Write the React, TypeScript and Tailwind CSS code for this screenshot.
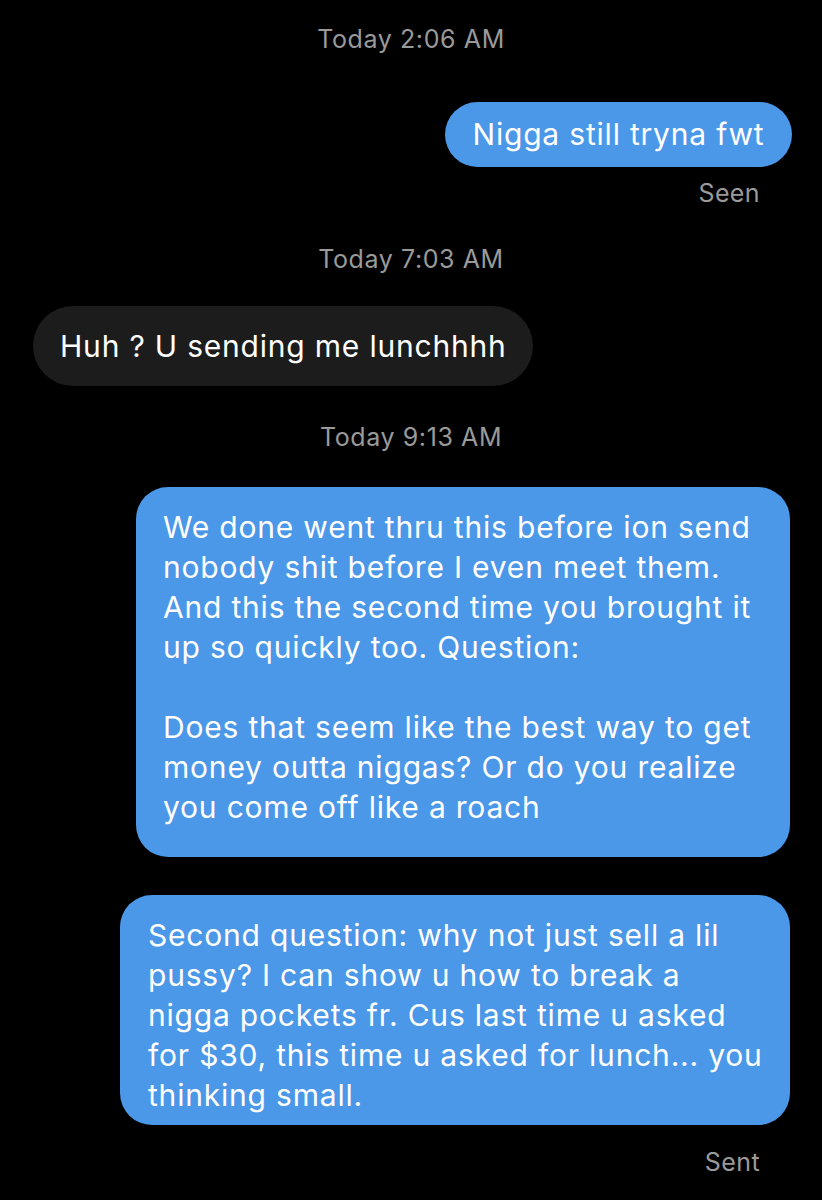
const font = { fontFamily: "Inter, 'Noto Sans', sans-serif" };

function Stamp({ children, className = "" }: { children: string; className?: string }) {
  return (
    <div className={`text-center text-[25px] leading-[30px] text-[#9a9a9a] tracking-[0.6px] ${className}`}>
      {children}
    </div>
  );
}

function Status({ children, className = "" }: { children: string; className?: string }) {
  return (
    <div className={`text-right pr-[62px] text-[25px] leading-[30px] text-[#9a9a9a] tracking-[0.4px] ${className}`}>
      {children}
    </div>
  );
}

const first = [
  "We done went thru this before ion send",
  "nobody shit before I even meet them.",
  "And this the second time you brought it",
  "up so quickly too. Question:",
  "\u00a0",
  "Does that seem like the best way to get",
  "money outta niggas? Or do you realize",
  "you come off like a roach",
];

const second = [
  "Second question: why not just sell a lil",
  "pussy? I can show u how to break a",
  "nigga pockets fr. Cus last time u asked",
  "for $30, this time u asked for lunch... you",
  "thinking small.",
];

export default function App() {
  return (
    <div className="w-[822px] h-[1200px] bg-black text-white overflow-hidden" style={font}>
      <Stamp className="pt-[24px]">Today 2:06 AM</Stamp>

      <div className="flex justify-end pr-[30px] mt-[48px]">
        <div className="w-[347px] h-[65px] rounded-[33px] bg-[#4b97e8] flex items-center justify-center text-[30px] tracking-[0.8px]">
          Nigga still tryna fwt
        </div>
      </div>
      <Status className="mt-[11px]">Seen</Status>

      <Stamp className="mt-[36px]">Today 7:03 AM</Stamp>

      <div className="flex justify-start pl-[33px] mt-[32px]">
        <div className="w-[500px] h-[80px] rounded-[40px] bg-[#1c1c1c] flex items-center pl-[27px] text-[30px] tracking-[0.8px]">
          Huh ? U sending me lunchhhh
        </div>
      </div>

      <Stamp className="mt-[36px]">Today 9:13 AM</Stamp>

      <div className="flex justify-end pr-[32px] mt-[35px]">
        <div className="w-[654px] rounded-[32px] bg-[#4b97e8] pl-[27px] pt-[20px] pb-[30px] text-[30px] leading-[40px] tracking-[0.8px]">
          {first.map((l, i) => (
            <div key={i}>{l}</div>
          ))}
        </div>
      </div>

      <div className="flex justify-end pr-[32px] mt-[38px]">
        <div className="w-[670px] rounded-[32px] bg-[#4b97e8] pl-[28px] pt-[20px] pb-[10px] text-[30px] leading-[40px] tracking-[0.8px]">
          {second.map((l, i) => (
            <div key={i}>{l}</div>
          ))}
        </div>
      </div>
      <Status className="mt-[22px]">Sent</Status>
    </div>
  );
}
